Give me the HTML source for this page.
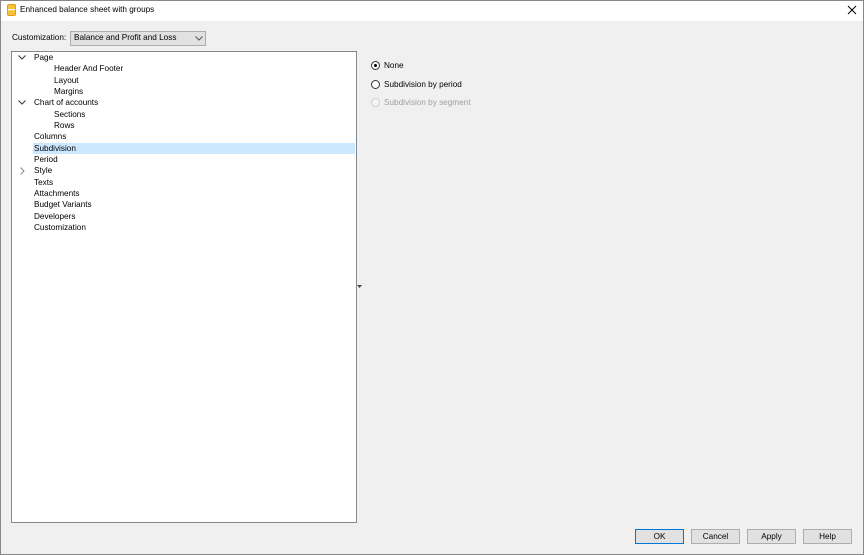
<html><head><style>
body{margin:0;width:864px;height:555px;background:#f0f0f0;font-family:"Liberation Sans",sans-serif;font-size:8.2px;color:#000;position:relative;overflow:hidden}
.a{position:absolute;white-space:nowrap}
.frame{position:absolute;left:0;top:0;width:862px;height:553px;border:1px solid #888}
.title{position:absolute;left:1px;top:1px;width:862px;height:20px;background:#fff}
.tree{position:absolute;left:11px;top:51px;width:344px;height:470px;background:#fff;border:1px solid #828790}
.r{position:absolute;height:11px;line-height:11px}
.btn{position:absolute;top:529px;width:47px;height:13px;border:1px solid #adadad;background:#e1e1e1;text-align:center;line-height:13px}
.rad{position:absolute;left:371px;width:7px;height:7px;border:1px solid #333;border-radius:50%;background:#fff}
</style></head><body>
<div class="frame"></div>
<div class="title"></div>
<svg class="a" style="left:7px;top:4px" width="9" height="12"><rect x="0.5" y="0.5" width="8" height="11" rx="1.5" fill="#f7c13a" stroke="#e0a010"/><rect x="1" y="5" width="7" height="1.2" fill="#fff"/></svg>
<div class="a" style="left:20px;top:5px">Enhanced balance sheet with groups</div>
<svg class="a" style="left:847px;top:5px" width="10" height="10"><path d="M1 1L9 9M9 1L1 9" stroke="#000" stroke-width="1"/></svg>
<div class="a" style="left:12px;top:33px">Customization:</div>
<div class="a" style="left:70px;top:31px;width:134px;height:13px;border:1px solid #adadad;background:#e1e1e1"><span class="a" style="left:3px;top:1px">Balance and Profit and Loss</span>
<svg class="a" style="left:124px;top:4px" width="8" height="5"><path d="M0.5 0.5L4 4L7.5 0.5" fill="none" stroke="#555"/></svg></div>
<div class="tree">
<div class="r" style="left:21px;top:91px;width:322px;background:#cce8ff"></div>
<svg class="a" style="left:6px;top:3px" width="8" height="5"><path d="M0.5 0.5L4 4L7.5 0.5" fill="none" stroke="#333"/></svg>
<svg class="a" style="left:6px;top:48px" width="8" height="5"><path d="M0.5 0.5L4 4L7.5 0.5" fill="none" stroke="#333"/></svg>
<svg class="a" style="left:8px;top:115px" width="5" height="8"><path d="M0.5 0.5L4 4L0.5 7.5" fill="none" stroke="#888"/></svg>
<div class="r" style="left:22px;top:0px">Page</div>
<div class="r" style="left:42px;top:11.3px">Header And Footer</div>
<div class="r" style="left:42px;top:22.6px">Layout</div>
<div class="r" style="left:42px;top:34px">Margins</div>
<div class="r" style="left:22px;top:45.3px">Chart of accounts</div>
<div class="r" style="left:42px;top:56.6px">Sections</div>
<div class="r" style="left:42px;top:68px">Rows</div>
<div class="r" style="left:22px;top:79.3px">Columns</div>
<div class="r" style="left:22px;top:90.6px">Subdivision</div>
<div class="r" style="left:22px;top:102px">Period</div>
<div class="r" style="left:22px;top:113.3px">Style</div>
<div class="r" style="left:22px;top:124.6px">Texts</div>
<div class="r" style="left:22px;top:136px">Attachments</div>
<div class="r" style="left:22px;top:147.3px">Budget Variants</div>
<div class="r" style="left:22px;top:158.6px">Developers</div>
<div class="r" style="left:22px;top:170px">Customization</div>
</div>
<svg class="a" style="left:357px;top:285px" width="5" height="4"><path d="M0 0H5L2.5 3Z" fill="#444"/></svg>
<div class="rad" style="top:61px"><div class="a" style="left:2px;top:2px;width:3px;height:3px;border-radius:50%;background:#000"></div></div>
<div class="a" style="left:384px;top:61px">None</div>
<div class="rad" style="top:80px"></div>
<div class="a" style="left:384px;top:80px">Subdivision by period</div>
<div class="rad" style="top:98px;border-color:#ccc;background:#f5f5f5"></div>
<div class="a" style="left:384px;top:98px;color:#a0a0a0">Subdivision by segment</div>
<div class="btn" style="left:635px;border-color:#0078d7">OK</div>
<div class="btn" style="left:691px">Cancel</div>
<div class="btn" style="left:747px">Apply</div>
<div class="btn" style="left:803px">Help</div>
</body></html>
